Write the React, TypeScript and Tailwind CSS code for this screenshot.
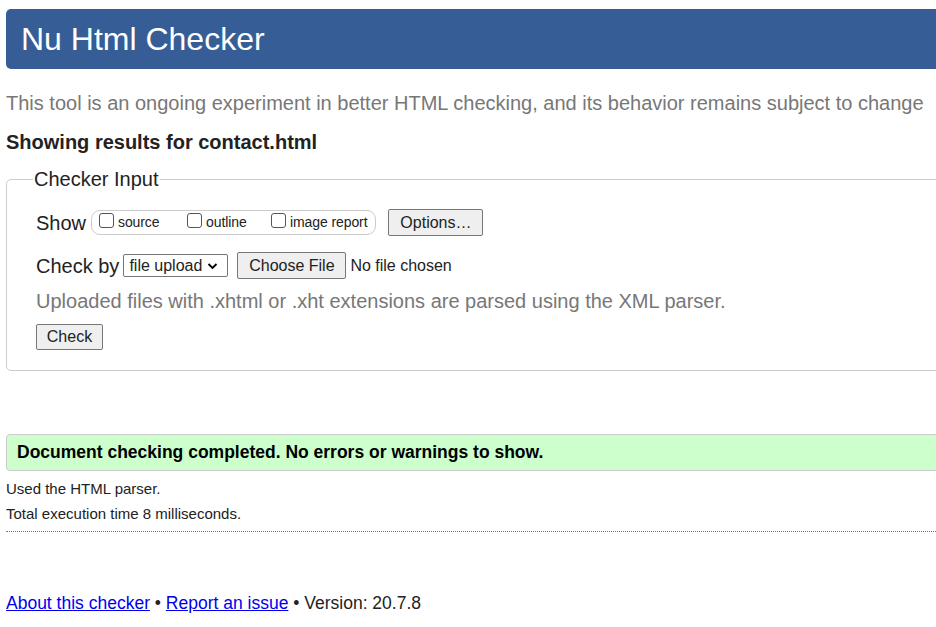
function Box() {
  return <span className="inline-block w-[15px] h-[15px] border border-[#555] rounded-[3px] bg-white mr-[4px] -translate-y-[2px]" />;
}

export default function App() {
  return (
    <div className="w-[936px] h-[627px] overflow-hidden bg-white font-['Liberation_Sans',Arial,sans-serif] text-[#222]">
      <div className="w-[1000px] pl-[6px] pt-[9px]">
        {/* Header */}
        <div className="h-[60px] bg-[#365d95] rounded-l-[5px] pl-[15px] flex items-center">
          <h1 className="text-white text-[32px] leading-none">Nu Html Checker</h1>
        </div>

        <p className="mt-[22px] text-[20px] leading-[24px] text-[#777]">
          This tool is an ongoing experiment in better HTML checking, and its behavior remains subject to change
        </p>
        <p className="mt-[15px] text-[20px] leading-[24px] font-bold">Showing results for contact.html</p>

        {/* Checker input */}
        <fieldset className="mt-[13px] border border-[#ccc] rounded-l-[5px] pl-[29px] pb-[20px] pt-0">
          <legend className="px-[1px] ml-[-3px] text-[20px] leading-[24px]">Checker Input</legend>

          <div className="flex items-center mt-[18px] h-[27px]">
            <span className="text-[20px]">Show</span>
            <div className="ml-[5px] h-[25px] border border-[#ccc] rounded-[9px] flex items-center pl-[7px] pr-[8px] text-[14px] tracking-[-0.1px]">
              <label className="flex items-center w-[88px]"><Box />source</label>
              <label className="flex items-center w-[84px]"><Box />outline</label>
              <label className="flex items-center"><Box />image report</label>
            </div>
            <button className="ml-[12px] h-[27px] w-[95px] text-[16px] bg-[#efefef] border border-[#767676] rounded-[2px]">Options…</button>
          </div>

          <div className="flex items-center mt-[16px] h-[27px]">
            <span className="text-[20px]">Check by</span>
            <div className="ml-[4px] h-[23px] w-[105px] border border-[#767676] rounded-[2px] flex items-center pl-[5px] text-[16px] bg-white">
              file upload
              <svg className="ml-[5px]" width="11" height="8" viewBox="0 0 11 8"><path d="M1.5 2 L5.5 6 L9.5 2" fill="none" stroke="#000" strokeWidth="1.8" /></svg>
            </div>
            <button className="ml-[9px] h-[27px] w-[109px] text-[16px] bg-[#efefef] border border-[#767676] rounded-[2px]">Choose File</button>
            <span className="ml-[4px] text-[16px]">No file chosen</span>
          </div>

          <p className="mt-[10px] text-[20px] leading-[24px] text-[#777]">
            Uploaded files with .xhtml or .xht extensions are parsed using the XML parser.
          </p>
          <button className="mt-[11px] h-[26px] w-[67px] text-[16px] bg-[#efefef] border border-[#767676] rounded-[2px]">Check</button>
        </fieldset>

        {/* Result */}
        <div className="mt-[63px] h-[37px] bg-[#ccffcc] border border-[#ccc] rounded-l-[4px] pl-[10px] flex items-center">
          <span className="text-[17.5px] font-bold text-black">Document checking completed. No errors or warnings to show.</span>
        </div>

        <p className="mt-[10px] text-[15px] leading-[16px]">Used the HTML parser.</p>
        <p className="mt-[9px] text-[15px] leading-[16px]">Total execution time 8 milliseconds.</p>
        <div className="mt-[9px] border-t border-dotted border-[#777]" />

        <p className="mt-[60px] text-[17.5px] leading-[22px]">
          <a href="#" className="text-[#0000ee] underline">About this checker</a>
          {" • "}
          <a href="#" className="text-[#0000ee] underline">Report an issue</a>
          {" • Version: 20.7.8"}
        </p>
      </div>
    </div>
  );
}
